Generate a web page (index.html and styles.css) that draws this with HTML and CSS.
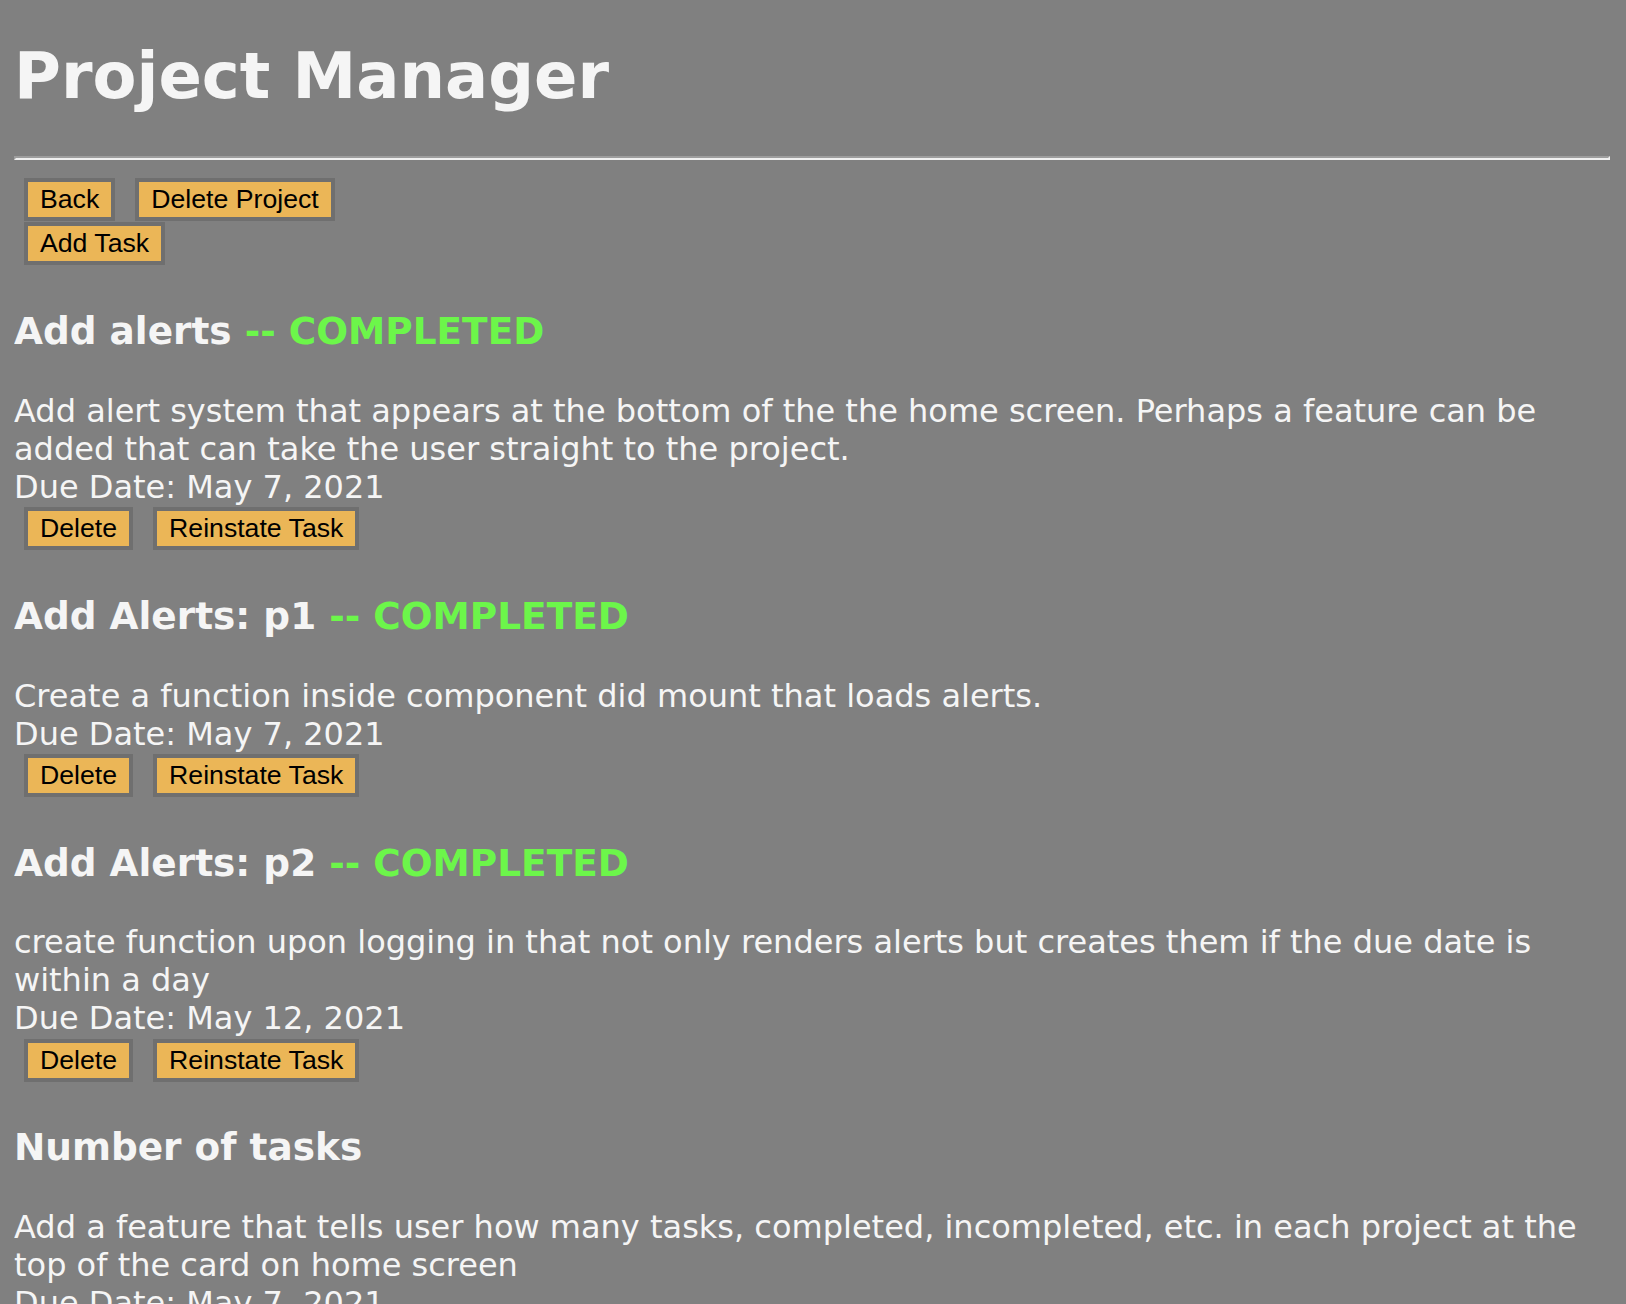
FILE: index.html
```html
<!DOCTYPE html>
<html>
<head>
<meta charset="utf-8">
<title>Project Manager</title>
<link rel="stylesheet" href="styles.css">
</head>
<body>
<h1 class="title">Project Manager</h1>
<hr class="divider">
<div class="toolbar">
  <div class="btn-row">
    <button class="btn">Back</button>
    <button class="btn">Delete Project</button>
  </div>
  <div class="btn-row row-last">
    <button class="btn">Add Task</button>
  </div>
</div>

<div class="task">
  <h3 class="task-title">Add alerts <span class="status">-- COMPLETED</span></h3>
  <p class="task-desc">Add alert system that appears at the bottom of the the home screen. Perhaps a feature can be added that can take the user straight to the project.</p>
  <div class="task-due">Due Date: May 7, 2021</div>
  <div class="btn-row row-last">
    <button class="btn">Delete</button>
    <button class="btn">Reinstate Task</button>
  </div>
</div>

<div class="task">
  <h3 class="task-title">Add Alerts: p1 <span class="status">-- COMPLETED</span></h3>
  <p class="task-desc">Create a function inside component did mount that loads alerts.</p>
  <div class="task-due">Due Date: May 7, 2021</div>
  <div class="btn-row row-last">
    <button class="btn">Delete</button>
    <button class="btn">Reinstate Task</button>
  </div>
</div>

<div class="task">
  <h3 class="task-title">Add Alerts: p2 <span class="status">-- COMPLETED</span></h3>
  <p class="task-desc">create function upon logging in that not only renders alerts but creates them if the due date is within a day</p>
  <div class="task-due">Due Date: May 12, 2021</div>
  <div class="btn-row row-last">
    <button class="btn">Delete</button>
    <button class="btn">Reinstate Task</button>
  </div>
</div>

<div class="task">
  <h3 class="task-title">Number of tasks</h3>
  <p class="task-desc">Add a feature that tells user how many tasks, completed, incompleted, etc. in each project at the top of the card on home screen</p>
  <div class="task-due">Due Date: May 7, 2021</div>
  <div class="btn-row row-last">
    <button class="btn">Delete</button>
    <button class="btn">Complete Task</button>
  </div>
</div>
</body>
</html>
```

FILE: styles.css
```css
html {
  background: #808080;
}

body {
  margin: 0 16px 14px 14px;
  padding-top: 0.1px;
  background: #808080;
  color: #f5f5f5;
  font-family: "DejaVu Sans", Verdana, sans-serif;
  font-size: 32px;
  line-height: 38px;
}

.title {
  font-size: 64px;
  font-weight: bold;
  line-height: normal;
  margin: 39px 0 42.6px 0;
}

.divider {
  height: 0;
  margin: 0 0 18px 0;
  border-top: 2px solid #9d9d9d;
  border-left: 2px solid #9d9d9d;
  border-bottom: 2px solid #efefef;
  border-right: 2px solid #efefef;
}

.btn-row {
  display: flex;
  gap: 20px;
  margin: 1.4px 0 0 10px;
  line-height: normal;
}

.row-last {
  padding-bottom: 6.2px;
}

.btn {
  font-family: "Liberation Sans", Arial, sans-serif;
  font-size: 26.67px;
  line-height: normal;
  color: #000;
  background: #ebb657;
  border: 4px solid #6f6f6f;
  padding: 2px 12px;
  margin: 0;
}

.task-title {
  font-size: 37.44px;
  font-weight: bold;
  line-height: normal;
  margin: 37.44px 0 38.9px 0;
}

.status {
  color: #6cf64a;
}

.task-desc {
  margin: 0;
}

.task-due {
  margin: 0;
}
```
